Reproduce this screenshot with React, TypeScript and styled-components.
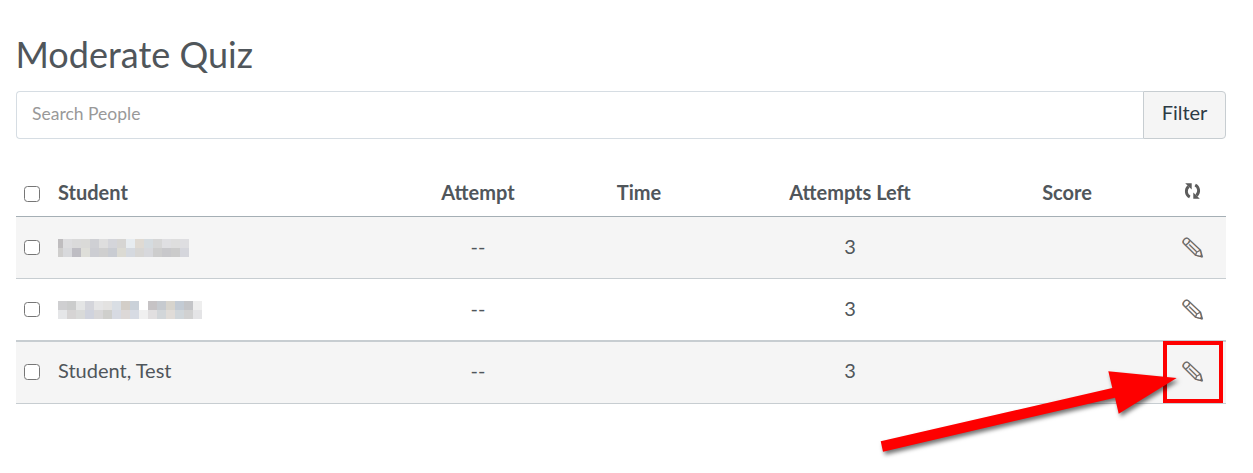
import React from "react";
import styled, { createGlobalStyle } from "styled-components";

const GlobalStyle = createGlobalStyle`
  * { box-sizing: border-box; }
  body {
    margin: 0;
    background: #fff;
    color: #50565b;
    font-family: Lato, "Liberation Sans", sans-serif;
    font-size: 20px;
  }
`;

const Page = styled.main`
  position: relative;
  width: 1253px;
  height: 473px;
  padding: 30px 27px 0 16px;
  overflow: hidden;
`;

const Title = styled.h1`
  margin: 0 0 12px -0.5px;
  font-size: 36px;
  font-weight: 400;
  line-height: 49px;
`;

const SearchBar = styled.div`
  display: flex;
  height: 48px;
`;

const SearchInput = styled.input`
  flex: 1;
  min-width: 0;
  padding: 0 15px 3px;
  border: 1px solid #d6dde3;
  border-right: 0;
  border-radius: 4px 0 0 4px;
  background: #fff;
  font: 17.5px Lato, sans-serif;
  outline: 0;
  &::placeholder { color: #999; opacity: 1; }
`;

const FilterButton = styled.button`
  width: 83px;
  padding: 0 0 6px;
  border: 1px solid #c7cdd1;
  border-radius: 0 4px 4px 0;
  background: #f5f5f5;
  color: #2d3b45;
  font: 20px Lato, sans-serif;
`;

const Table = styled.div`
  margin-top: 31px;
`;

const Row = styled.div<{ $shaded?: boolean; $height: number; $line: string; $thick?: boolean; $raise?: boolean }>`
  display: grid;
  grid-template-columns: 386px 152px 170px 252px 182px 68px;
  align-items: center;
  height: ${(p) => p.$height}px;
  padding-bottom: ${(p) => (p.$raise ? 2 : 0)}px;
  background: ${(p) => (p.$shaded ? "#f5f5f5" : "#fff")};
  border-bottom: ${(p) => (p.$thick ? 2 : 1)}px solid ${(p) => p.$line};
`;

const Cell = styled.div<{ $bold?: boolean }>`
  display: flex;
  justify-content: center;
  line-height: 26px;
  padding-bottom: 3px;
  font-weight: ${(p) => (p.$bold ? 700 : 400)};
`;

const StudentCell = styled(Cell)`
  justify-content: flex-start;
  align-items: center;
  padding-left: 8px;
`;

const IconCell = styled(Cell)`
  padding-bottom: 0;
`;

const Checkbox = styled.input<{ $size: number }>`
  appearance: none;
  flex: none;
  width: 16px;
  height: ${(p) => p.$size}px;
  margin: ${(p) => (p.$size === 16 ? 4 : 3)}px 18px 0 0;
  border: 1.25px solid #767676;
  border-radius: 3.5px;
  background: #fff;
`;

const Mosaic = styled.div<{ $first: number }>`
  display: grid;
  grid-template-columns: ${(p) => p.$first}px;
  grid-auto-columns: 9px;
  grid-template-rows: 9px 9px;
  grid-auto-flow: column;
  margin-top: 4px;
`;

const Tile = styled.span<{ $color: string }>`
  background: ${(p) => p.$color};
`;

const PencilSvg = styled.svg`
  display: block;
  margin-top: 1px;
  margin-left: 1px;
`;

const RefreshSvg = styled.svg`
  display: block;
  margin-bottom: 4px;
`;

const Highlight = styled.div`
  position: absolute;
  left: 1163px;
  top: 341px;
  width: 60px;
  height: 62px;
  border: 4px solid #fe0000;
`;

const Arrow = styled.svg`
  position: absolute;
  left: 870px;
  top: 360px;
  overflow: visible;
  filter: drop-shadow(2px 3px 2px rgba(0, 0, 0, 0.55));
`;

const PencilStrokes = () => (
  <>
    <path d="M1.3 6C.3 3.4 3.3.4 5.9 1.4L18.4 13.2 20.2 20 13.5 18.2Z" />
    <path d="M3.5 7.9C5.5 7.2 7.3 5.3 7.8 3.4" />
    <path d="M7.3 7.6L14.7 14.8" />
    <path d="M13.5 18.2L14.6 15.2 18.4 13.2" strokeWidth=".8" />
    <path d="M18.1 19.5L19.7 18" />
  </>
);

const Pencil = () => (
  <PencilSvg width="22" height="22" viewBox="0 0 22 22" fill="none" strokeLinejoin="round">
    <g stroke="#e09a5c" strokeWidth="1.1" transform="translate(-.45 0)"><PencilStrokes /></g>
    <g stroke="#6f9cc4" strokeWidth="1.1" transform="translate(.4 0)"><PencilStrokes /></g>
    <g stroke="#695852" strokeWidth=".85"><PencilStrokes /></g>
  </PencilSvg>
);

const Refresh = () => (
  <RefreshSvg width="17" height="18" viewBox="0 0 17 18" fill="none" stroke="#5c5c5c" strokeWidth="2.9">
    <path d="M5.8 15C1.8 12.9 1.2 7.4 4.6 4.4M11.2 3C15.2 5.1 15.8 10.6 12.4 13.6" />
    <path d="M1.2 1.3H7.7V7.6ZM15.8 16.7H9.3V10.4Z" fill="#5c5c5c" stroke="none" />
  </RefreshSvg>
);

type Person = { name?: string; first?: number; tiles?: string[] };

const people: Person[] = [
  {
    first: 5,
    tiles: [
      "#bfbdbf", "#cfcecd", "#dddddf", "#d8d9dc", "#dadada", "#bebdc3", "#dadad8", "#deded9",
      "#cfd0d4", "#cccdd2", "#dedede", "#cfcfcf", "#d4d5da", "#c9ccd2", "#d6d5d3", "#dbdad3",
      "#e7ecf0", "#d5d9df", "#dfdad3", "#d7d6d4", "#d5dbdf", "#d7d8dc", "#d6d6d6", "#cdcdcd",
      "#dfdfe2", "#c8c8cb", "#dedede", "#cbcbcb", "#dedee1", "#d5d6dc",
    ],
  },
  {
    first: 9,
    tiles: [
      "#cfcfd1", "#e5e6e8", "#cbcccc", "#d6d4d4", "#e4e5e5", "#d9dad9", "#d4d5db", "#d0d3dd",
      "#e5e5e6", "#d8d7d8", "#e3e2e1", "#cfcfcc", "#d9dee4", "#d7dae2", "#d3cec8", "#dcd8d7",
      "#cad1d9", "#d7dbe3", "#ffffff", "#f0f0f0", "#c6c3c5", "#e1dfe0", "#c6cacf", "#d2d6d9",
      "#d7d4cd", "#e0dcd8", "#c3cbd4", "#d0d6da", "#c4c5c8", "#d1d1d1", "#eeeeee", "#e4e4e6",
    ],
  },
  { name: "Student, Test" },
];

export default function App() {
  return (
    <>
      <GlobalStyle />
      <Page>
        <Title>Moderate Quiz</Title>
        <SearchBar>
          <SearchInput placeholder="Search People" />
          <FilterButton>Filter</FilterButton>
        </SearchBar>
        <Table>
          <Row $height={47} $line="#a5afb5">
            <StudentCell $bold>
              <Checkbox type="checkbox" $size={16} />
              Student
            </StudentCell>
            <Cell $bold>Attempt</Cell>
            <Cell $bold>Time</Cell>
            <Cell $bold>Attempts Left</Cell>
            <Cell $bold>Score</Cell>
            <IconCell><Refresh /></IconCell>
          </Row>
          {people.map((person, i) => (
            <Row
              key={i}
              $shaded={i % 2 === 0}
              $height={i === 1 ? 63 : 62}
              $thick={i === 1}
              $raise={i === 2}
              $line="#c7cdd1"
            >
              <StudentCell>
                <Checkbox type="checkbox" $size={person.name ? 16 : 15} />
                {person.name ?? (
                  <Mosaic $first={person.first ?? 9}>
                    {person.tiles?.map((color, n) => <Tile key={n} $color={color} />)}
                  </Mosaic>
                )}
              </StudentCell>
              <Cell>--</Cell>
              <Cell />
              <Cell>3</Cell>
              <Cell />
              <IconCell><Pencil /></IconCell>
            </Row>
          ))}
        </Table>
        <Highlight />
        <Arrow width="320" height="100" viewBox="870 360 320 100">
          <path fill="#fe0000" d="M880.7 441.3L1112.3 388 1108.3 371.3 1176.7 378 1118.7 413.7 1115 397.7 883 451.7Z" />
        </Arrow>
      </Page>
    </>
  );
}
